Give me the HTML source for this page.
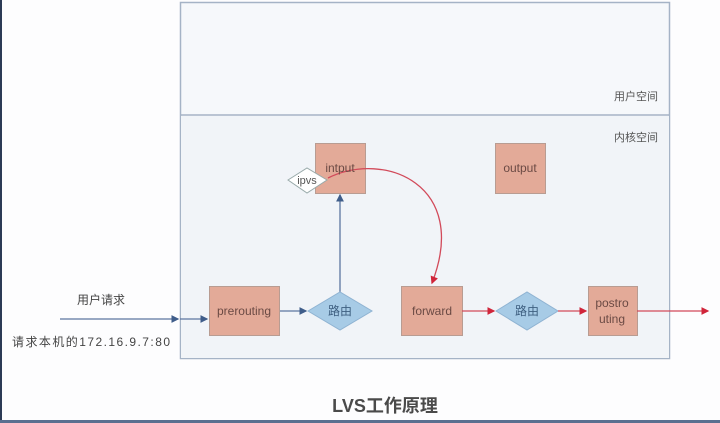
<!DOCTYPE html>
<html><head><meta charset="utf-8"><style>
html,body{margin:0;padding:0;background:#fff;}
svg{display:block;}
text{font-family:"Liberation Sans","Noto Sans CJK SC",sans-serif;}
</style></head><body>
<svg width="720" height="423" viewBox="0 0 720 423" xmlns="http://www.w3.org/2000/svg">
<defs>
<marker id="ab" markerWidth="6" markerHeight="6" refX="5" refY="3" orient="auto"><path d="M0,0 L6,3 L0,6 z" fill="#3f5d8a"/></marker>
<marker id="ar" markerWidth="6" markerHeight="6" refX="5" refY="3" orient="auto"><path d="M0,0 L6,3 L0,6 z" fill="#d0253a"/></marker>
</defs>
<rect x="0" y="0" width="720" height="423" fill="#fdfdfe"/>
<rect x="0" y="0" width="2" height="423" fill="#2c3a55"/>
<rect x="0" y="420" width="720" height="3" fill="#5a6f90"/>
<rect x="180.5" y="2.5" width="489" height="356" fill="#f6f8fb" stroke="#a5b3c6" stroke-width="1.5"/>
<rect x="181" y="116" width="488" height="242" fill="#f1f4f8"/>
<line x1="181" y1="115" x2="669" y2="115" stroke="#a5b3c6" stroke-width="1.5"/>
<text x="658" y="100" font-size="11" fill="#555" text-anchor="end">用户空间</text>
<text x="658" y="141" font-size="11" fill="#555" text-anchor="end">内核空间</text>
<line x1="60" y1="319" x2="178" y2="319" stroke="#5d76a0" stroke-width="1.3" marker-end="url(#ab)"/>
<line x1="180" y1="319" x2="207" y2="319" stroke="#5d76a0" stroke-width="1.3" marker-end="url(#ab)"/>
<line x1="279" y1="311" x2="306" y2="311" stroke="#5d76a0" stroke-width="1.3" marker-end="url(#ab)"/>
<line x1="340" y1="292" x2="340" y2="195" stroke="#5d76a0" stroke-width="1.3" marker-end="url(#ab)"/>
<g fill="#e3aa98" stroke="#b89c92" stroke-width="1">
<rect x="315.5" y="143.5" width="50" height="50"/>
<rect x="495.5" y="143.5" width="50" height="50"/>
<rect x="209.5" y="286.5" width="70" height="49"/>
<rect x="401.5" y="286.5" width="61" height="49"/>
<rect x="588.5" y="286.5" width="49" height="49"/>
</g>
<g fill="#a7cbe6" stroke="#8fb3d2">
<polygon points="308,311 340,292 372,311 340,330"/>
<polygon points="496,311 527,292 558,311 527,330"/>
</g>
<path d="M328,178 C385,150 470,185 432,283" fill="none" stroke="#d24a5a" stroke-width="1.3" marker-end="url(#ar)"/>
<polygon points="288,180 307,168 327,180 307,193" fill="#fff" stroke="#9aa"/>
<text x="307" y="184" font-size="11" fill="#555" text-anchor="middle">ipvs</text>
<line x1="462" y1="311" x2="494" y2="311" stroke="#d24a5a" stroke-width="1.3" marker-end="url(#ar)"/>
<line x1="558" y1="311" x2="586" y2="311" stroke="#d24a5a" stroke-width="1.3" marker-end="url(#ar)"/>
<line x1="637" y1="311" x2="708" y2="311" stroke="#d24a5a" stroke-width="1.3" marker-end="url(#ar)"/>
<g font-size="12" fill="#6b4a44" text-anchor="middle">
<text x="340" y="172">intput</text>
<text x="520" y="172">output</text>
<text x="244" y="315">prerouting</text>
<text x="432" y="315">forward</text>
<text x="612" y="307">postro</text>
<text x="612" y="323">uting</text>
</g>
<text x="340" y="315" font-size="12" fill="#3e5f80" text-anchor="middle">路由</text>
<text x="527" y="315" font-size="12" fill="#3e5f80" text-anchor="middle">路由</text>
<text x="77" y="304" font-size="12" fill="#444">用户请求</text>
<text x="12" y="346" font-size="12" fill="#444" textLength="158" lengthAdjust="spacing">请求本机的172.16.9.7:80</text>
<text x="385" y="412" font-size="18" font-weight="bold" fill="#4a4a4a" text-anchor="middle">LVS工作原理</text>
</svg>
</body></html>
